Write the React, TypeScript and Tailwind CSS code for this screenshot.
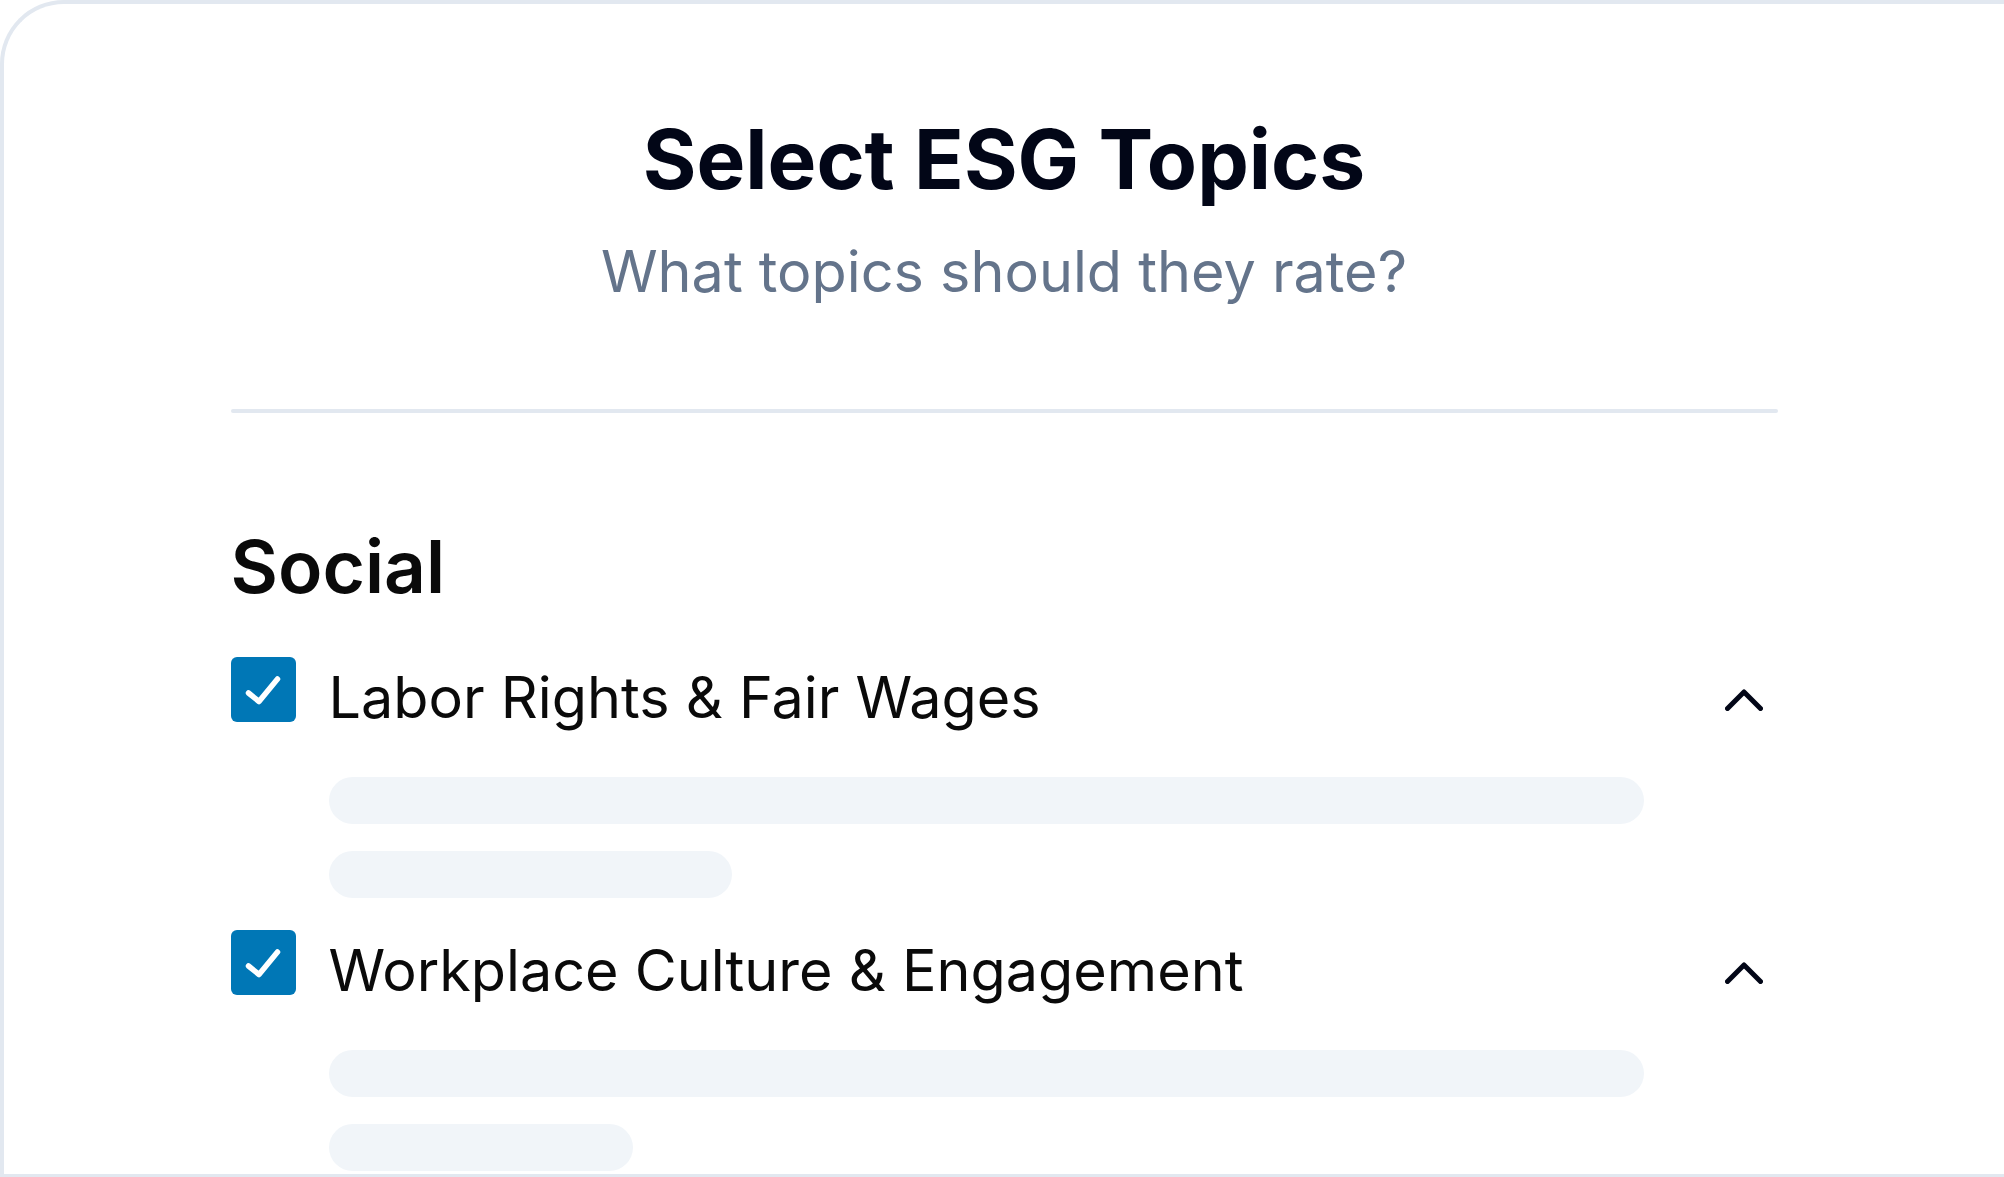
import React from "react";

// topics shown under the "Social" heading
const topics = [
  { id: "labor", label: "Labor Rights & Fair Wages", shortBar: "w-[403px]" },
  { id: "culture", label: "Workplace Culture & Engagement", shortBar: "w-[304px]" },
];

// Checkbox
// blue ticked box
const Checkbox = () => (
  <div className="flex h-[65px] w-[65px] shrink-0 rounded-[6px] bg-[#0077b6]">
    <svg width="65" height="65" viewBox="0 0 65 65" fill="none">
      <polyline
        points="17.5 36 28 44.5 46.5 22"
        stroke="white"
        strokeWidth="5.5"
        strokeLinecap="round"
        strokeLinejoin="round"
      />
    </svg>
  </div>
);

// ChevronUp
const ChevronUp = () => (
  <svg width="38" height="23" viewBox="0 0 38 23" fill="none" className="mr-[15px] mt-[31px] shrink-0">
    <polyline
      points="2.5 20.5 19 4 35.5 20.5"
      stroke="#020617"
      strokeWidth="5"
      strokeLinecap="round"
      strokeLinejoin="round"
    />
  </svg>
);

// TopicRow
// checkbox, label, chevron and the loading lines underneath
const TopicRow = ({ label, shortBar }: { label: string; shortBar: string }) => (
  <div className="pb-[32px]">
    <div className="flex items-start">
      <Checkbox />
      <div className="ml-[33px] mt-[8px] text-[57.5px] leading-[65px] text-[#0a0a0a]">{label}</div>
      <div className="ml-auto">
        <ChevronUp />
      </div>
    </div>

    {/* skeleton lines */}
    <div className="ml-[98px] mt-[47px] flex flex-col gap-[27px]">
      <div className="h-[47px] w-[1315px] rounded-full bg-[#f1f5f9]" />
      <div className={`h-[47px] rounded-full bg-[#f1f5f9] ${shortBar}`} />
    </div>
  </div>
);

export default function App() {
  return (
    <div className="h-[1177px] w-full overflow-hidden bg-white font-['Inter',sans-serif]">
      <div className="h-full rounded-tl-[64px] border-b-[3px] border-l-4 border-t-4 border-[#e2e8f0] bg-white">
        <div className="mx-auto w-[1547px] pt-[115px]">

          {/* header */}
          <h1 className="text-center text-[82px] font-bold leading-[82px] text-[#020617]">
            Select ESG Topics
          </h1>
          <p className="mt-[42px] text-center text-[57.5px] leading-[57.5px] text-[#64748b]">
            What topics should they rate?
          </p>

          {/* divider */}
          <div className="mt-[108px] h-[4px] w-full rounded-full bg-[#e2e8f0]" />

          {/* section */}
          <h2 className="mt-[117px] text-[73px] font-semibold leading-[73px] text-[#0a0a0a]">Social</h2>

          <div className="mt-[54px]">
            {topics.map((topic) => (
              <TopicRow key={topic.id} label={topic.label} shortBar={topic.shortBar} />
            ))}
          </div>
        </div>
      </div>
    </div>
  );
}
